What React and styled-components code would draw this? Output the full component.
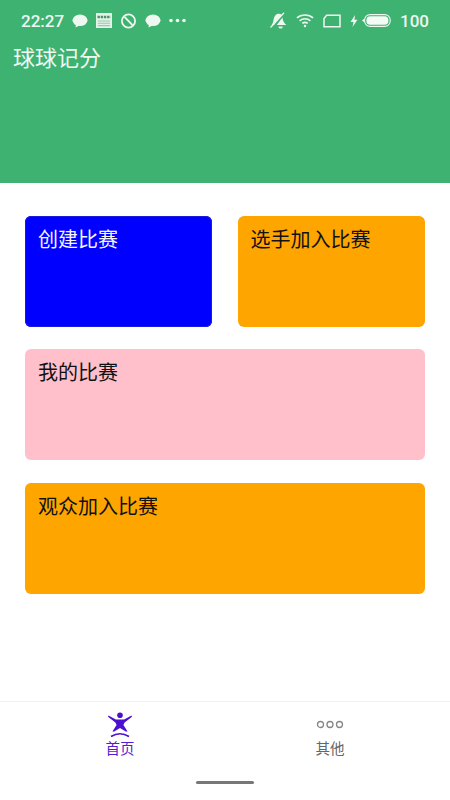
import styled, { createGlobalStyle } from "styled-components"

const GlobalStyle = createGlobalStyle`
	html, body {
		margin: 0;
		padding: 0;
		background: #fff;
	}
	* {
		box-sizing: border-box;
	}
`

export default function App() {
	return (
		<>
			<GlobalStyle />
			<Page>
				<Header>
					<StatusBar>
						<StatusGroup>
							<Clock>22:27</Clock>
							<Bubble />
							<News />
							<Blocked />
							<Bubble />
							<Dots />
						</StatusGroup>
						<StatusGroup $gap={9}>
							<BellOff />
							<Wifi />
							<Sim />
							<BatteryGroup>
								<Bolt />
								<Battery />
							</BatteryGroup>
							<Clock>100</Clock>
						</StatusGroup>
					</StatusBar>
					<Title>球球记分</Title>
				</Header>
				<Main>
					<Row>
						<Card $bg='#0000ff' $color='#f4f4ff' $width='187px' $outlined>
							创建比赛
						</Card>
						<Card $bg='#ffa500' $width='187.5px'>选手加入比赛</Card>
					</Row>
					<Card $bg='#ffc0cb'>我的比赛</Card>
					<Card $bg='#ffa500'>观众加入比赛</Card>
				</Main>
				<TabBar>
					<Tab $active>
						<PersonIcon />
						<span>首页</span>
					</Tab>
					<Tab>
						<MoreIcon />
						<span>其他</span>
					</Tab>
				</TabBar>
				<HomeBar>
					<HomeHandle />
				</HomeBar>
			</Page>
		</>
	)
}

function Bubble() {
	return (
		<svg width='16' height='14' viewBox='0 0 16 14'>
			<ellipse cx='8' cy='6.3' rx='7.5' ry='5.8' fill='#eef7f0' />
			<path d='M4 10 L3.5 13.5 L7.5 11.5 Z' fill='#eef7f0' />
		</svg>
	)
}

function News() {
	return (
		<svg width='16' height='15' viewBox='0 0 16 15'>
			<rect width='16' height='15' fill='#e2f2e8' />
			<path d='M1.5 4 H14.5' stroke='#4f8f68' strokeWidth='2.4' strokeDasharray='2.4 0.8' />
			<path d='M2 8 H14 M2 10.3 H14 M2 12.6 H14' stroke='#9cc8ad' strokeWidth='1.1' />
		</svg>
	)
}

function Blocked() {
	return (
		<svg width='17' height='16' viewBox='0 0 17 16'>
			<circle cx='8.5' cy='8' r='6.6' fill='none' stroke='#eef7f0' strokeWidth='1.8' />
			<path d='M4.5 3.8 L12.5 12.2' stroke='#eef7f0' strokeWidth='1.8' />
		</svg>
	)
}

function Dots() {
	return (
		<svg width='17' height='5' viewBox='0 0 17 5'>
			<circle cx='2' cy='2.5' r='1.8' fill='#eef7f0' />
			<circle cx='8.5' cy='2.5' r='1.8' fill='#eef7f0' />
			<circle cx='15' cy='2.5' r='1.8' fill='#eef7f0' />
		</svg>
	)
}

function BellOff() {
	return (
		<svg width='18' height='17' viewBox='0 0 18 17'>
			<path d='M2.5 13 C5 10.5 4 5.5 6.5 3.2 C8 1.6 10.8 1.4 12.6 2.6 L5 13 Z' fill='#eef7f0' />
			<path d='M7.8 13 L13.4 5.6 C13.8 8.8 15 11.4 17.4 13 Z' fill='#eef7f0' />
			<path d='M1.5 15.5 L15 0.8' stroke='#eef7f0' strokeWidth='1.3' />
			<path d='M9.4 14.4 H13.8 A2.2 2.2 0 0 1 9.4 14.4 Z' fill='#eef7f0' />
		</svg>
	)
}

function Wifi() {
	return (
		<svg width='18' height='15' viewBox='0 0 19 15' fill='none' stroke='#eef7f0' strokeWidth='1.7'>
			<path d='M1 4.8 C5.5 0.6 13.5 0.6 18 4.8' />
			<path d='M3.8 7.8 C7 5 12 5 15.2 7.8' />
			<path d='M6.6 10.6 C8.2 9.3 10.8 9.3 12.4 10.6' />
			<circle cx='9.5' cy='13.2' r='1.3' fill='#eef7f0' stroke='none' />
		</svg>
	)
}

function Sim() {
	return (
		<svg width='18' height='14' viewBox='0 0 18 14' fill='none'>
			<path d='M3.6 1.2 H17 V12.8 H1 V4.5 Z' stroke='#eef7f0' strokeWidth='1.5' />
		</svg>
	)
}

function Bolt() {
	return (
		<svg width='8' height='12' viewBox='0 0 8 12'>
			<path d='M5 0 L0.5 7 H3.5 L2.5 12 L7.5 4.8 H4.5 Z' fill='#eef7f0' />
		</svg>
	)
}

function Battery() {
	return (
		<svg width='29' height='15' viewBox='0 0 29 15'>
			<path d='M0 7.5 L2.5 5.5 V9.5 Z' fill='#eef7f0' />
			<rect x='2.6' y='1.6' width='25.6' height='11.8' rx='5.5' fill='none' stroke='#eef7f0' strokeWidth='1.1' />
			<rect x='4.4' y='3.3' width='22' height='8.4' rx='3.8' fill='#f4faf6' />
		</svg>
	)
}

function PersonIcon() {
	return (
		<svg width='24' height='26' viewBox='0 0 24 26'>
			<circle cx='12' cy='3.2' r='2.8' fill='#4a0fd0' />
			<path
				d='M0.5 3.6 L7.8 7.6 H16.2 L23.5 3.6 L24 4.8 L16.6 10.5 L15.4 13 L19.6 19.6 L17.8 19.6 L12 16 L6.2 19.6 L4.4 19.6 L8.6 13 L7.4 10.5 L0 4.8 Z'
				fill='#4a0fd0'
			/>
			<path d='M3 24.5 C8.5 21.2 15.5 21.2 21 24.5' fill='none' stroke='#4a0fd0' strokeWidth='1.6' />
		</svg>
	)
}

function MoreIcon() {
	return (
		<svg width='28' height='26' viewBox='0 0 28 26' fill='none' stroke='#868686' strokeWidth='1.3'>
			<circle cx='4.5' cy='12.5' r='3' />
			<circle cx='14' cy='12.5' r='3' />
			<circle cx='23.5' cy='12.5' r='3' />
		</svg>
	)
}

const Page = styled.div`
	width: 450px;
	height: 800px;
	display: flex;
	flex-direction: column;
	overflow: hidden;
	background: #fff;
	font-family: "Roboto", "Noto Sans CJK SC", sans-serif;
`

const Header = styled.header`
	height: 183px;
	flex: none;
	background: #3eb270;
	color: #f0f9f3;
`

const StatusBar = styled.div`
	height: 41px;
	padding: 0 21px;
	display: flex;
	align-items: center;
	justify-content: space-between;
`

const StatusGroup = styled.div`
	display: flex;
	align-items: center;
	gap: ${(p) => p.$gap || 8}px;
`

const BatteryGroup = styled.div`
	display: flex;
	align-items: center;
	gap: 4px;
`

const Clock = styled.span`
	font-size: 17px;
	font-weight: 500;
	color: #eef7f0;
`

const Title = styled.h1`
	margin: 0;
	padding: 3px 0 0 13px;
	font-size: 22px;
	font-weight: 400;
	line-height: 30px;
`

const Main = styled.main`
	flex: 1;
	padding: 33px 25px 0;
	display: flex;
	flex-direction: column;
	gap: 22.4px;
`

const Row = styled.div`
	display: flex;
	justify-content: space-between;
`

const Card = styled.div`
	width: ${(p) => p.$width || "100%"};
	height: 111px;
	padding: 9px 13px;
	border-radius: 6px;
	background: ${(p) => p.$bg};
	color: ${(p) => p.$color || "#111"};
	font-size: 20px;
	line-height: 30px;
	${(p) => p.$outlined && "box-shadow: inset 0 0 0 1px #1a1ad8;"}
`

const TabBar = styled.nav`
	height: 66px;
	flex: none;
	padding: 0 15px;
	margin-top: -1px;
	border-top: 1px solid #f1f1f1;
	display: grid;
	grid-template-columns: 1fr 1fr;
`

const Tab = styled.div`
	display: flex;
	flex-direction: column;
	align-items: center;
	padding-top: 10px;
	gap: 3px;
	color: ${(p) => (p.$active ? "#5a1bd0" : "#666")};
	font-size: 14.5px;
	line-height: 18px;
`

const HomeBar = styled.div`
	height: 33px;
	flex: none;
	display: flex;
	justify-content: center;
	padding-top: 14px;
`

const HomeHandle = styled.div`
	width: 58px;
	height: 3px;
	border-radius: 2px;
	background: #777;
`
